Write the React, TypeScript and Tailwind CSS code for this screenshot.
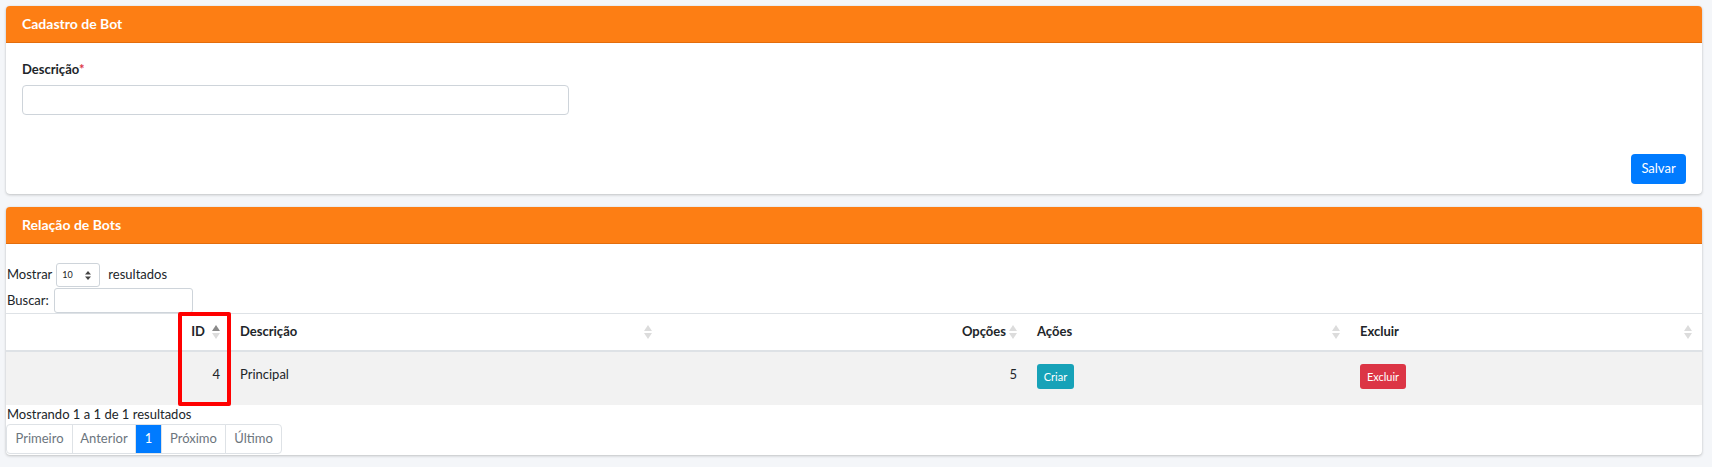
import React from 'react';

const FONT = "font-['Lato','Roboto','Liberation_Sans',sans-serif]";

interface SortIconProps {
  active?: boolean;
}

const SortIcon: React.FC<SortIconProps> = ({ active }) => (
  <svg
    width="8"
    height="14"
    viewBox="0 0 8 14"
    className="absolute right-[10px] top-1/2 -translate-y-1/2"
  >
    <polygon points="0,6 4,0 8,6" fill={active ? '#8a8a8a' : '#dcdcdc'} />
    <polygon points="0,8 4,14 8,8" fill="#dcdcdc" />
  </svg>
);

const CardHeader: React.FC<{ title: string }> = ({ title }) => (
  <div className="h-[37px] bg-[#fd7e14] border-b border-[#e36d0c] px-4 flex items-center rounded-t-[4px]">
    <h3 className="text-white font-bold text-[14px] leading-none">{title}</h3>
  </div>
);

const cardClass =
  'bg-white rounded-[4px] shadow-[0_0_1px_rgba(0,0,0,0.125),0_1px_3px_rgba(0,0,0,0.2)]';

const cols = 'grid grid-cols-[224px_432px_365px_323px_352px]';

const pages = [
  { label: 'Primeiro', w: 'w-[67px]' },
  { label: 'Anterior', w: 'w-[64px]' },
  { label: '1', w: 'w-[27px]', active: true },
  { label: 'Próximo', w: 'w-[65px]' },
  { label: 'Último', w: 'w-[57px]' },
];

export default function App() {
  return (
    <div className={`min-h-[467px] bg-[#f4f6f9] pt-[6px] pl-[6px] pr-[10px] text-[#212529] ${FONT}`}>
      {/* Cadastro */}
      <div className={cardClass}>
        <CardHeader title="Cadastro de Bot" />
        <div className="px-4 pt-4 pb-[10px]">
          <label className="block text-[13px] font-bold leading-[21px]">
            Descrição<span className="text-[#dc3545]">*</span>
          </label>
          <input
            type="text"
            className="mt-[5px] block w-[547px] h-[30px] border border-[#ced4da] rounded-[4px] bg-white outline-none"
          />
          <div className="mt-[39px] flex justify-end">
            <button className="h-[30px] w-[55px] bg-[#007bff] text-white text-[13px] rounded-[4px]">
              Salvar
            </button>
          </div>
        </div>
      </div>

      {/* Relação */}
      <div className={`${cardClass} mt-[13px]`}>
        <CardHeader title="Relação de Bots" />
        <div className="pt-[19px] pb-px text-[13px]">
          <div className="flex items-center h-[24px] pl-px">
            <span>Mostrar</span>
            <div className="ml-[4px] h-[24px] w-[44px] border border-[#ced4da] rounded-[3px] flex items-center pl-[5px] pr-[8px] justify-between">
              <span className="text-[9px]">10</span>
              <svg width="6" height="9" viewBox="0 0 6 9">
                <polygon points="0,3.5 3,0 6,3.5" fill="#444" />
                <polygon points="0,5.5 3,9 6,5.5" fill="#444" />
              </svg>
            </div>
            <span className="ml-[8px]">resultados</span>
          </div>
          <div className="flex items-center h-[25px] mt-px pl-px">
            <span>Buscar:</span>
            <input
              type="text"
              className="ml-[5px] h-[25px] w-[139px] border border-[#ced4da] rounded-[3px] outline-none"
            />
          </div>

          <div className="relative">
            <div className={`${cols} h-[39px] border-t border-b-2 border-[#dee2e6] font-bold`}>
              <div className="relative flex items-center justify-end pl-[10px] pr-[25px]">
                ID
                <SortIcon active />
              </div>
              <div className="relative flex items-center pl-[10px] pr-[25px]">
                Descrição
                <SortIcon />
              </div>
              <div className="relative flex items-center justify-end pl-[10px] pr-[21px]">
                Opções
                <SortIcon />
              </div>
              <div className="relative flex items-center pl-[10px] pr-[25px]">
                Ações
                <SortIcon />
              </div>
              <div className="relative flex items-center pl-[10px] pr-[25px]">
                Excluir
                <SortIcon />
              </div>
            </div>
            <div className={`${cols} h-[53px] bg-[#f2f2f2] leading-[21px]`}>
              <div className="px-[10px] pt-3 text-right">4</div>
              <div className="px-[10px] pt-3">Principal</div>
              <div className="px-[10px] pt-3 text-right">5</div>
              <div className="px-[10px] pt-3">
                <button className="h-[25px] w-[37px] bg-[#17a2b8] text-white text-[11px] rounded-[3px] leading-none">
                  Criar
                </button>
              </div>
              <div className="px-[10px] pt-3">
                <button className="h-[25px] w-[46px] bg-[#dc3545] text-white text-[11px] rounded-[3px] leading-none">
                  Excluir
                </button>
              </div>
            </div>
            {/* highlight */}
            <div className="absolute left-[172px] top-[-1px] w-[53px] h-[94px] border-4 border-[#ff0000] rounded-[2px] pointer-events-none" />
          </div>

          <div className="leading-[19px] pl-px">Mostrando 1 a 1 de 1 resultados</div>
          <div className="flex h-[30px]">
            {pages.map((p, i) => (
              <div
                key={p.label}
                className={`${p.w} flex items-center justify-center border border-[#dee2e6] ${
                  i > 0 ? '-ml-px' : 'rounded-l-[4px]'
                } ${i === pages.length - 1 ? 'rounded-r-[4px]' : ''} ${
                  p.active ? 'bg-[#007bff] border-[#007bff] text-white relative' : 'bg-white text-[#6c757d]'
                }`}
              >
                {p.label}
              </div>
            ))}
          </div>
        </div>
      </div>
    </div>
  );
}
